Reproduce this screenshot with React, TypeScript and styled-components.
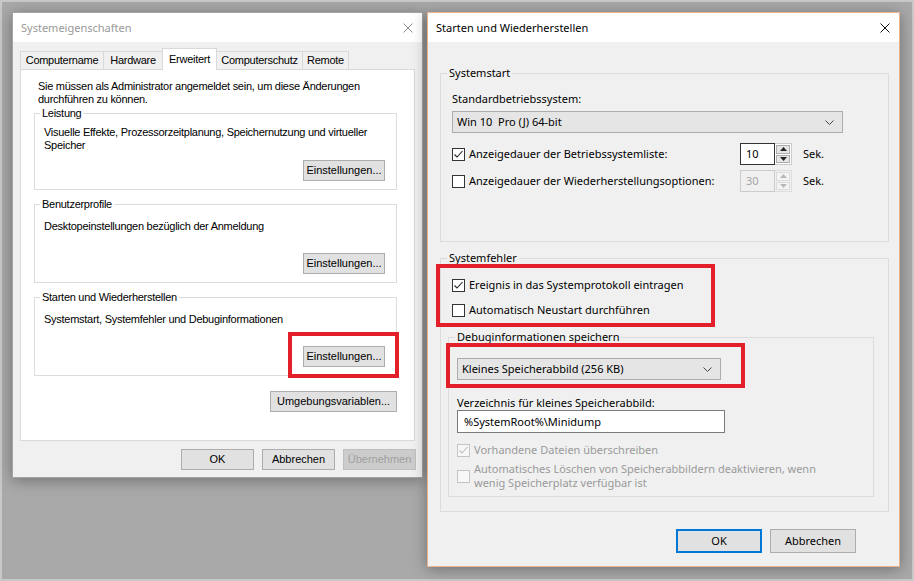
import React from 'react';
import styled, { createGlobalStyle } from 'styled-components';

const GlobalStyle = createGlobalStyle`
  * { box-sizing: border-box; }
  html, body { margin: 0; padding: 0; }
  body { background: #a9a9a9; overflow: hidden; }
`;

const Desktop = styled.main`
  position: relative;
  width: 914px;
  height: 581px;
  overflow: hidden;
  background: #a9a9a9;
  box-shadow: inset 0 0 0 2px #c8c8c8;
`;

const Window = styled.section<{ $left: number; $top: number; $width: number; $height: number; $active?: boolean }>`
  position: absolute;
  left: ${(p) => p.$left}px;
  top: ${(p) => p.$top}px;
  width: ${(p) => p.$width}px;
  height: ${(p) => p.$height}px;
  display: flex;
  flex-direction: column;
  background: #f0f0f0;
  border: 1px solid ${(p) => (p.$active ? '#e9b38d' : '#a3a3a3')};
  box-shadow: 0 2px 14px rgba(0, 0, 0, 0.35);
  color: #000;
`;

const TitleBar = styled.header`
  display: flex;
  align-items: center;
  flex-shrink: 0;
  height: 29px;
  padding-left: 8px;
  background: #fff;
`;

const Title = styled.span<{ $inactive?: boolean }>`
  font-family: 'Noto Sans', 'Open Sans', sans-serif;
  font-size: 11px;
  color: ${(p) => (p.$inactive ? '#999999' : '#000')};
`;

const CloseGlyph = styled.svg`
  margin-left: auto;
  margin-right: 9px;
`;

const Highlight = styled.div<{ $left: number; $top: number; $width: number; $height: number }>`
  position: absolute;
  left: ${(p) => p.$left}px;
  top: ${(p) => p.$top}px;
  width: ${(p) => p.$width}px;
  height: ${(p) => p.$height}px;
  border: 4px solid #e3202a;
  pointer-events: none;
  z-index: 5;
`;

/* ---------- classic (left) dialog ---------- */

const ClassicBody = styled.div`
  flex: 1;
  display: flex;
  flex-direction: column;
  padding: 6px 7px 7px 7px;
  font-family: 'Liberation Sans', Arial, sans-serif;
  font-size: 11px;
  line-height: 13px;
  letter-spacing: -0.27px;
`;

const TabStrip = styled.div`
  display: flex;
  align-items: flex-end;
  height: 21px;
`;

const Tab = styled.div<{ $w: number; $selected?: boolean }>`
  position: relative;
  z-index: ${(p) => (p.$selected ? 2 : 1)};
  width: ${(p) => p.$w}px;
  height: ${(p) => (p.$selected ? 22 : 18)}px;
  margin-right: -1px;
  margin-bottom: ${(p) => (p.$selected ? -1 : 0)}px;
  display: flex;
  align-items: center;
  justify-content: center;
  background: ${(p) => (p.$selected ? '#fff' : '#f0f0f0')};
  border: 1px solid #d9d9d9;
  border-bottom: none;
  white-space: nowrap;
`;

const TabPanel = styled.div`
  flex: 1;
  display: flex;
  flex-direction: column;
  padding: 10px 17px 0 13px;
  background: #fff;
  border: 1px solid #d9d9d9;
`;

const Notice = styled.p`
  margin: 0 0 1px 4px;
  white-space: nowrap;
`;

const ClassicGroup = styled.fieldset`
  margin: 0 0 8px 0;
  padding: 0;
  min-width: 0;
  border: 1px solid #dcdcdc;
`;

const ClassicLegend = styled.legend`
  margin-left: 5px;
  padding: 0 2px;
  line-height: 13px;
`;

const ClassicGroupBody = styled.div<{ $h: number; $pt: number }>`
  display: flex;
  flex-direction: column;
  height: ${(p) => p.$h}px;
  padding: ${(p) => p.$pt}px 11px 8px 9px;
  white-space: nowrap;
`;

const ClassicButton = styled.button<{ $w: number }>`
  width: ${(p) => p.$w}px;
  height: 21px;
  padding: 0;
  border: 1px solid #adadad;
  background: #e1e1e1;
  font: inherit;
  color: #000;
  white-space: nowrap;

  &:disabled {
    background: #cccccc;
    border-color: #bfbfbf;
    color: #a0a0a0;
  }
`;

const GroupButton = styled(ClassicButton)`
  align-self: flex-end;
  margin-top: auto;
`;

const EnvButton = styled(ClassicButton)`
  align-self: flex-end;
  margin-top: 7px;
`;

const ClassicFooter = styled.div`
  display: flex;
  justify-content: flex-end;
  gap: 8px;
  margin-top: 8px;
  margin-right: -1px;
`;

/* ---------- modern (right) dialog ---------- */

const ModernBody = styled.div`
  flex: 1;
  display: flex;
  flex-direction: column;
  padding: 23px 10px 13px 12px;
  font-family: 'Noto Sans', 'Open Sans', sans-serif;
  font-size: 11px;
  line-height: 16px;
`;

const Group = styled.fieldset<{ $margin: string }>`
  margin: ${(p) => p.$margin};
  padding: 0;
  min-width: 0;
  border: 1px solid #dcdcdc;
`;

const Legend = styled.legend`
  margin-left: 6px;
  padding: 0 2px;
  line-height: 16px;
`;

const GroupBody = styled.div<{ $h?: number; $pad: string }>`
  display: flex;
  flex-direction: column;
  align-items: flex-start;
  height: ${(p) => (p.$h ? `${p.$h}px` : 'auto')};
  padding: ${(p) => p.$pad};
`;

const DebugGroup = styled(Group)`
  align-self: stretch;
`;

const FieldLabel = styled.div<{ $gap?: number }>`
  margin-top: ${(p) => p.$gap ?? 0}px;
  line-height: 15px;
`;

const Combo = styled.div<{ $w: number; $gap: number }>`
  display: flex;
  align-items: center;
  width: ${(p) => p.$w}px;
  height: 22px;
  margin-top: ${(p) => p.$gap}px;
  padding: 0 8px 0 4px;
  background: #e5e5e5;
  border: 1px solid #acacac;
  white-space: pre;
`;

const Chevron = styled.svg`
  margin-left: auto;
`;

const TimeoutRow = styled.div<{ $gap: number }>`
  display: grid;
  grid-template-columns: 288px 52px auto;
  align-items: center;
  height: 22px;
  margin-top: ${(p) => p.$gap}px;
`;

const CheckRow = styled.label<{ $gap?: number; $disabled?: boolean; $tight?: boolean }>`
  display: flex;
  align-items: center;
  gap: 4px;
  margin-top: ${(p) => p.$gap ?? 0}px;
  color: ${(p) => (p.$disabled ? '#9a9a9a' : '#000')};
  line-height: ${(p) => (p.$tight ? 14 : 16)}px;
  white-space: nowrap;
`;

const Box = styled.span<{ $disabled?: boolean }>`
  display: flex;
  flex-shrink: 0;
  width: 13px;
  height: 13px;
  border: 1px solid ${(p) => (p.$disabled ? '#c4c4c4' : '#333333')};
  background: ${(p) => (p.$disabled ? '#f7f7f7' : '#fff')};
`;

const Spinner = styled.div`
  display: flex;
  height: 22px;
`;

const SpinValue = styled.div<{ $disabled?: boolean }>`
  flex: 1;
  display: flex;
  align-items: center;
  padding-left: 5px;
  background: ${(p) => (p.$disabled ? '#f0f0f0' : '#fff')};
  border: 1px solid ${(p) => (p.$disabled ? '#cccccc' : '#333333')};
  color: ${(p) => (p.$disabled ? '#a5a5a5' : '#000')};
`;

const SpinButtons = styled.div<{ $disabled?: boolean }>`
  width: 17px;
  display: flex;
  flex-direction: column;
  gap: 1px;
  padding: 1px;
  border: 1px solid ${(p) => (p.$disabled ? '#dddddd' : '#cccccc')};
  border-left: none;
  background: ${(p) => (p.$disabled ? '#f0f0f0' : '#fff')};
`;

const SpinButton = styled.div<{ $disabled?: boolean }>`
  flex: 1;
  display: flex;
  align-items: center;
  justify-content: center;
  background: ${(p) => (p.$disabled ? '#f4f4f4' : '#e5e5e5')};
  border: 1px solid ${(p) => (p.$disabled ? '#dcdcdc' : '#adadad')};
`;

const Unit = styled.span`
  margin-left: 11px;
`;

const TextBox = styled.div`
  display: flex;
  align-items: center;
  width: 268px;
  height: 23px;
  padding-left: 6px;
  background: #fff;
  border: 1px solid #7a7a7a;
`;

const DialogFooter = styled.div`
  display: flex;
  justify-content: flex-end;
  gap: 8px;
  margin-top: 17px;
  padding-right: 33px;
`;

const DialogButton = styled.button<{ $default?: boolean }>`
  width: 86px;
  height: 24px;
  padding: 0;
  background: #e1e1e1;
  border: ${(p) => (p.$default ? '2px solid #0078d7' : '1px solid #adadad')};
  font: inherit;
  color: #000;
`;

/* ---------- small drawings ---------- */

function CloseIcon({ color }: { color: string }) {
  return (
    <CloseGlyph width="10" height="10" viewBox="0 0 10 10">
      <path d="M0.5 0.5L9.5 9.5M9.5 0.5L0.5 9.5" stroke={color} strokeWidth="1" fill="none" />
    </CloseGlyph>
  );
}

function Check({ checked, disabled }: { checked?: boolean; disabled?: boolean }) {
  return (
    <Box $disabled={disabled}>
      {checked && (
        <svg width="11" height="11" viewBox="0 0 11 11">
          <path d="M1.5 5.5L4 8L9.5 2" stroke={disabled ? '#bcbcbc' : '#222'} strokeWidth="1.1" fill="none" />
        </svg>
      )}
    </Box>
  );
}

function ChevronDown() {
  return (
    <Chevron width="9" height="5" viewBox="0 0 9 5">
      <path d="M0.5 0.5L4.5 4.5L8.5 0.5" stroke="#444" strokeWidth="1" fill="none" />
    </Chevron>
  );
}

function SpinBox({ value, disabled }: { value: string; disabled?: boolean }) {
  const arrow = disabled ? '#b8b8b8' : '#222';
  return (
    <Spinner>
      <SpinValue $disabled={disabled}>{value}</SpinValue>
      <SpinButtons $disabled={disabled}>
        <SpinButton $disabled={disabled}>
          <svg width="7" height="4" viewBox="0 0 7 4">
            <path d="M0 4L3.5 0L7 4Z" fill={arrow} />
          </svg>
        </SpinButton>
        <SpinButton $disabled={disabled}>
          <svg width="7" height="4" viewBox="0 0 7 4">
            <path d="M0 0L7 0L3.5 4Z" fill={arrow} />
          </svg>
        </SpinButton>
      </SpinButtons>
    </Spinner>
  );
}

const tabs = [
  { label: 'Computername', w: 84 },
  { label: 'Hardware', w: 60 },
  { label: 'Erweitert', w: 55, selected: true },
  { label: 'Computerschutz', w: 87 },
  { label: 'Remote', w: 47 },
];

function SystemProperties() {
  return (
    <Window $left={12} $top={12} $width={411} $height={466}>
      <TitleBar>
        <Title $inactive>Systemeigenschaften</Title>
        <CloseIcon color="#8a8a8a" />
      </TitleBar>
      <ClassicBody>
        <TabStrip>
          {tabs.map((t) => (
            <Tab key={t.label} $w={t.w} $selected={t.selected}>
              {t.label}
            </Tab>
          ))}
        </TabStrip>
        <TabPanel>
          <Notice>
            Sie müssen als Administrator angemeldet sein, um diese Änderungen
            <br />
            durchführen zu können.
          </Notice>
          <ClassicGroup>
            <ClassicLegend>Leistung</ClassicLegend>
            <ClassicGroupBody $h={69} $pt={6}>
              <span>
                Visuelle Effekte, Prozessorzeitplanung, Speichernutzung und virtueller
                <br />
                Speicher
              </span>
              <GroupButton $w={82}>Einstellungen...</GroupButton>
            </ClassicGroupBody>
          </ClassicGroup>
          <ClassicGroup>
            <ClassicLegend>Benutzerprofile</ClassicLegend>
            <ClassicGroupBody $h={71} $pt={9}>
              <span>Desktopeinstellungen bezüglich der Anmeldung</span>
              <GroupButton $w={82}>Einstellungen...</GroupButton>
            </ClassicGroupBody>
          </ClassicGroup>
          <ClassicGroup>
            <ClassicLegend>Starten und Wiederherstellen</ClassicLegend>
            <ClassicGroupBody $h={71} $pt={9}>
              <span>Systemstart, Systemfehler und Debuginformationen</span>
              <GroupButton $w={82}>Einstellungen...</GroupButton>
            </ClassicGroupBody>
          </ClassicGroup>
          <EnvButton $w={127}>Umgebungsvariablen...</EnvButton>
        </TabPanel>
        <ClassicFooter>
          <ClassicButton $w={73}>OK</ClassicButton>
          <ClassicButton $w={73}>Abbrechen</ClassicButton>
          <ClassicButton $w={73} disabled>
            Übernehmen
          </ClassicButton>
        </ClassicFooter>
      </ClassicBody>
      <Highlight $left={275} $top={319} $width={111} $height={46} />
    </Window>
  );
}

function StartupRecovery() {
  return (
    <Window $left={427} $top={12} $width={473} $height={555} $active>
      <TitleBar>
        <Title>Starten und Wiederherstellen</Title>
        <CloseIcon color="#111" />
      </TitleBar>
      <ModernBody>
        <Group $margin="0">
          <Legend>Systemstart</Legend>
          <GroupBody $h={160} $pad="10px 11px 0 11px">
            <div>Standardbetriebssystem:</div>
            <Combo $w={391} $gap={4}>
              Win 10  Pro (J) 64-bit
              <ChevronDown />
            </Combo>
            <TimeoutRow $gap={10}>
              <CheckRow>
                <Check checked />
                Anzeigedauer der Betriebssystemliste:
              </CheckRow>
              <SpinBox value="10" />
              <Unit>Sek.</Unit>
            </TimeoutRow>
            <TimeoutRow $gap={5}>
              <CheckRow>
                <Check />
                Anzeigedauer der Wiederherstellungsoptionen:
              </CheckRow>
              <SpinBox value="30" disabled />
              <Unit>Sek.</Unit>
            </TimeoutRow>
          </GroupBody>
        </Group>
        <Group $margin="8px 0 0 0">
          <Legend>Systemfehler</Legend>
          <GroupBody $pad="11px 11px 14px 11px">
            <CheckRow>
              <Check checked />
              Ereignis in das Systemprotokoll eintragen
            </CheckRow>
            <CheckRow $gap={9}>
              <Check />
              Automatisch Neustart durchführen
            </CheckRow>
            <DebugGroup $margin="11px 3px 0 -4px">
              <Legend>Debuginformationen speichern</Legend>
              <GroupBody $pad="13px 8px 6px 8px">
                <Combo $w={264} $gap={0}>
                  Kleines Speicherabbild (256 KB)
                  <ChevronDown />
                </Combo>
                <FieldLabel $gap={15}>Verzeichnis für kleines Speicherabbild:</FieldLabel>
                <TextBox>%SystemRoot%\Minidump</TextBox>
                <CheckRow $gap={9} $disabled>
                  <Check checked disabled />
                  Vorhandene Dateien überschreiben
                </CheckRow>
                <CheckRow $gap={4} $disabled $tight>
                  <Check disabled />
                  <span>
                    Automatisches Löschen von Speicherabbildern deaktivieren, wenn
                    <br />
                    wenig Speicherplatz verfügbar ist
                  </span>
                </CheckRow>
              </GroupBody>
            </DebugGroup>
          </GroupBody>
        </Group>
        <DialogFooter>
          <DialogButton $default>OK</DialogButton>
          <DialogButton>Abbrechen</DialogButton>
        </DialogFooter>
      </ModernBody>
      <Highlight $left={8} $top={251} $width={279} $height={63} />
      <Highlight $left={18} $top={330} $width={299} $height={45} />
    </Window>
  );
}

export default function App(): React.ReactElement {
  return (
    <>
      <GlobalStyle />
      <Desktop>
        <SystemProperties />
        <StartupRecovery />
      </Desktop>
    </>
  );
}
